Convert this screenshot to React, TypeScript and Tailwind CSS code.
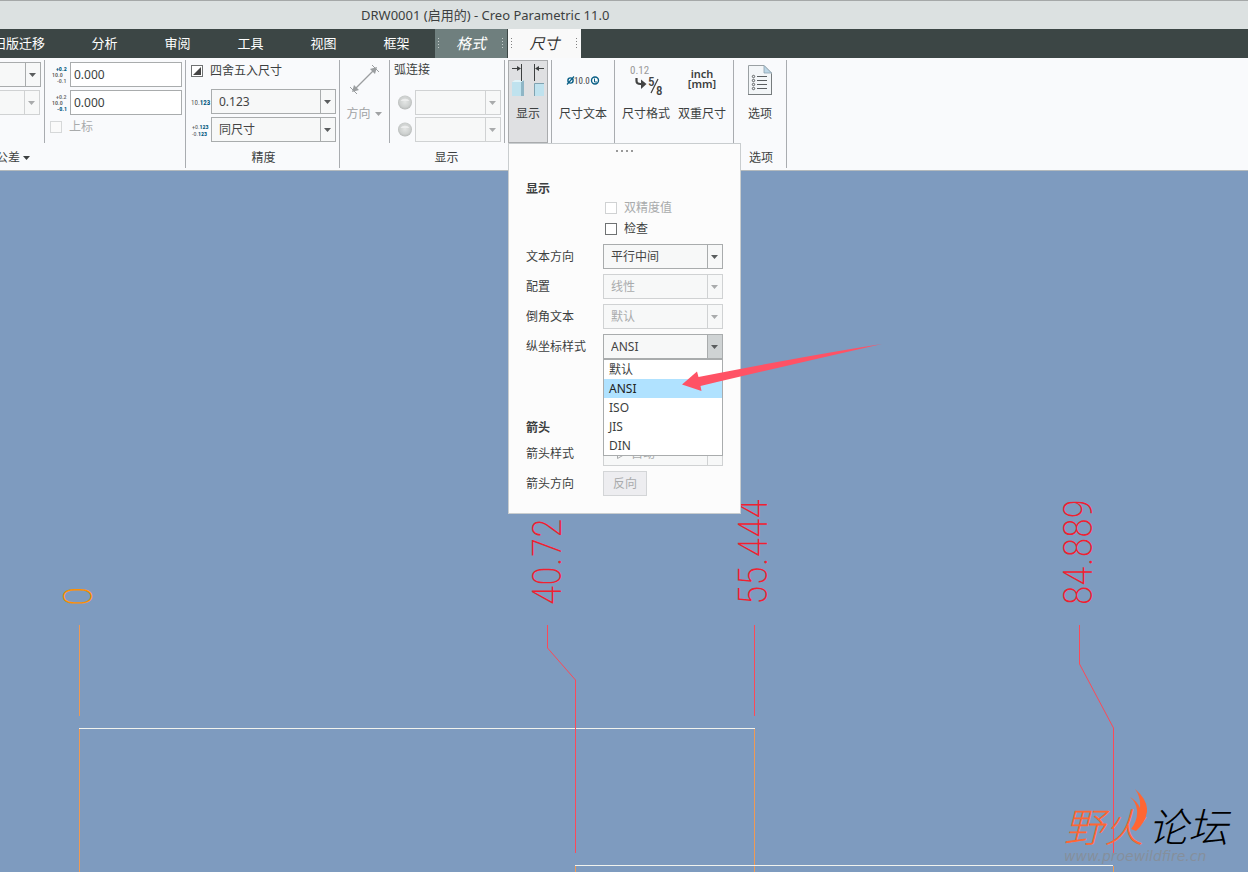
import React from 'react'
import clsx from 'clsx'

const tabs = ['分析', '审阅', '工具', '视图', '框架']
const ordinateStyles = ['默认', 'ANSI', 'ISO', 'JIS', 'DIN']
const narrow = "'Noto Sans ExtraCondensed', 'Roboto Condensed', 'Liberation Sans Narrow', Roboto, sans-serif"
const narrowThin =
  "'Noto Sans ExtraCondensed Thin', 'Noto Sans ExtraCondensed', 'Noto Sans Condensed', 'Roboto Condensed', 'Liberation Sans Narrow', Roboto, sans-serif"

type SelectBoxProps = {
  label: string
  value?: string
  disabled?: boolean
  open?: boolean
  className?: string
  icon?: React.ReactNode
}

const Caret = () => (
  <svg width="8" height="4" viewBox="0 0 8 4" className="shrink-0" aria-hidden="true">
    <path d="M0 0h7L3.500 4z" fill="currentColor" />
  </svg>
)

const SelectBox = ({ label, value = '', disabled, open, className, icon }: SelectBoxProps) => (
  <div
    className={clsx(
      'flex h-[25px] border bg-[#f7f8f8]',
      disabled ? 'border-[#d0d2d3] text-[#a9abac]' : 'border-[#a9acad] text-[#444]',
      className
    )}
  >
    {icon}
    <select
      aria-label={label}
      disabled={disabled}
      defaultValue={value}
      className="min-w-0 flex-1 appearance-none bg-transparent pl-[7px] opacity-100 outline-none"
    >
      <option value={value}>{value}</option>
    </select>
    <span
      className={clsx(
        'flex w-[15px] shrink-0 items-center justify-center border-l',
        disabled ? 'border-[#d0d2d3] text-[#a9abac]' : 'border-[#a9acad] text-[#5a5d5e]',
        open && 'bg-[#cfd3d4]'
      )}
    >
      <Caret />
    </span>
  </div>
)

const Separator = ({ className }: { className?: string }) => (
  <div className={clsx('mt-[2px] w-px shrink-0 self-stretch bg-[#a9acb0]', className)} />
)

const TabGrip = () => (
  <svg width="2" height="14" viewBox="0 0 2 14" className="opacity-60" aria-hidden="true">
    <path d="M0.500 1v12" stroke="currentColor" strokeDasharray="1 2" />
  </svg>
)

const GroupLabel = ({ children }: { children: React.ReactNode }) => (
  <div className="flex h-[27px] items-center justify-center gap-1 pt-[2px] pl-[2px]">{children}</div>
)

const ToleranceIcon = ({ upper }: { upper?: boolean }) => (
  <svg width="18" height="20" viewBox="0 0 18 20" className="shrink-0" fontFamily={narrow} fontSize="6" aria-hidden="true">
    <text x="4" y="6" fill={upper ? '#00567d' : '#666'} fontWeight={upper ? 700 : 500}>+0.2</text>
    <text x="0" y="12" fill="#555" fontWeight="500">10.0</text>
    <text x="5" y="18" fill={upper ? '#666' : '#00567d'} fontWeight={upper ? 500 : 700}>-0.1</text>
  </svg>
)

const DecimalIcon = () => (
  <svg width="20" height="12" viewBox="0 0 20 12" className="shrink-0" fontFamily={narrow} fontSize="7" aria-hidden="true">
    <text x="0" y="9" fill="#555">10.<tspan fill="#00567d" fontWeight="700">123</tspan></text>
  </svg>
)

const ToleranceDecimalIcon = () => (
  <svg width="20" height="18" viewBox="0 0 20 18" className="shrink-0" fontFamily={narrow} fontSize="6" aria-hidden="true">
    <text x="1" y="8" fill="#555">+0.<tspan fill="#00567d" fontWeight="700">123</tspan></text>
    <text x="1" y="15" fill="#555">-0.<tspan fill="#00567d" fontWeight="700">123</tspan></text>
  </svg>
)

const DirectionIcon = () => (
  <svg width="32" height="32" viewBox="0 0 32 32" fill="none" stroke="#9b9ea0" aria-hidden="true">
    <path d="M5 26L26 5" strokeWidth="1.2" />
    <path d="M23 1L30 8M1 23L8 30" />
    <path d="M28 3l-2 7-5-5zM3 28l2-7 5 5z" fill="#9b9ea0" stroke="none" />
  </svg>
)

const Sphere = () => (
  <svg width="16" height="16" viewBox="0 0 16 16" className="shrink-0" aria-hidden="true">
    <defs>
      <radialGradient id="sphere" cx="0.5" cy="0.45" r="0.55">
        <stop offset="0" stopColor="#e4e6e5" />
        <stop offset="0.7" stopColor="#cdd0cf" />
        <stop offset="1" stopColor="#b4b7b6" />
      </radialGradient>
    </defs>
    <circle cx="8" cy="7.500" r="7" fill="url(#sphere)" />
    <path d="M3.500 6a5 4 0 0 1 9 0z" fill="#eceded" />
  </svg>
)

const DisplayIcon = () => (
  <svg width="34" height="34" viewBox="-1 0 34 34" aria-hidden="true">
    <path d="M0 18h9v14H0z" fill="#bfe2ee" />
    <path d="M9 18l3-2v16H9z" fill="#8fb6c6" />
    <path d="M0 18l3-2h9l-3 2z" fill="#e2f3f8" />
    <path d="M22.500 32V19.500H32" fill="none" stroke="#7fa3b1" />
    <path d="M23 20h9v12h-9z" fill="#bfe2ee" />
    <path d="M9.500 0v17M22.500 0v17M0 4.500h8M24 4.500h8" fill="none" stroke="#3d4040" />
    <path d="M9 4.500L5 2v5zM23 4.500L27 2v5z" fill="#3d4040" />
  </svg>
)

const DimTextIcon = () => (
  <svg width="34" height="16" viewBox="0 0 34 16" fontFamily={narrow} aria-hidden="true">
    <circle cx="4.500" cy="7.500" r="2.600" fill="none" stroke="#0a5f86" strokeWidth="1.400" />
    <path d="M1 11.500L8 3.500" stroke="#0a5f86" strokeWidth="1.200" />
    <text x="8" y="11" fontSize="9" fill="#444">10.0</text>
    <circle cx="29" cy="7.500" r="3.500" fill="#fff" stroke="#0a5f86" strokeWidth="1.400" />
    <path d="M28.500 5.500v3.500H31" fill="none" stroke="#0a5f86" />
  </svg>
)

const DimFormatIcon = () => (
  <svg width="36" height="36" viewBox="0 0 36 36" fontFamily={narrow} aria-hidden="true">
    <text x="2" y="11" fontSize="11" fill="#999">0.12</text>
    <path d="M8.500 15v3q0 3 4 3h2" fill="none" stroke="#444" strokeWidth="2.200" />
    <path d="M13 16.500l5.500 4.500-5.500 5z" fill="#444" />
    <text x="20" y="23" fontSize="13" fontWeight="500" fill="#444">5</text>
    <path d="M23 30L30 16" stroke="#444" strokeWidth="1.200" />
    <text x="28" y="32" fontSize="13" fontWeight="500" fill="#444">8</text>
  </svg>
)

const OptionsIcon = () => (
  <svg width="26" height="34" viewBox="0 0 26 34" aria-hidden="true">
    <path d="M1.500 1.500H17L24.500 9v21.500h-23z" fill="#f3f6f8" stroke="#9aa0a3" />
    <path d="M17 1.500V9h7.500z" fill="#bcd6e6" stroke="#8ea3ae" strokeWidth="0.800" />
    <path d="M1 30.500h24M24.500 10v21" stroke="#777c7e" />
    <g fill="none" stroke="#5a5e60">
      <circle cx="6.500" cy="12.500" r="1.200" />
      <circle cx="6.500" cy="16.500" r="1.200" />
      <circle cx="6.500" cy="20.500" r="1.200" />
      <circle cx="6.500" cy="24.500" r="1.200" />
      <path d="M10 12.500h10M10 16.500h10M10 20.500h10M10 24.500h10" />
    </g>
  </svg>
)

type RibbonButtonProps = { label: string; active?: boolean; className?: string; children: React.ReactNode }

const RibbonButton = ({ label, active, className, children }: RibbonButtonProps) => (
  <button
    className={clsx(
      'mt-[2px] flex h-[83px] flex-col items-center border',
      active ? 'border-[#a9abad] bg-[#dfe0e2]' : 'border-transparent',
      className
    )}
  >
    <span className="flex h-[39px] items-center justify-center">{children}</span>
    <span className="leading-[27px] whitespace-nowrap">{label}</span>
  </button>
)

const PanelRow = ({ label, children }: { label: string; children: React.ReactNode }) => (
  <div className="flex h-[25px] items-center">
    <span className="w-[77px] shrink-0">{label}</span>
    {children}
  </div>
)

const DisplayPanel = () => (
  <div className="absolute top-full left-0 z-20 w-[233px] border border-[#c9cdcf] bg-[#fcfcfc] px-[17px] pb-[17px]">
    <div className="flex h-[34px] justify-center gap-[3px] pt-[6px]">
      <i className="size-[2px] bg-[#999]" />
      <i className="size-[2px] bg-[#999]" />
      <i className="size-[2px] bg-[#999]" />
      <i className="size-[2px] bg-[#999]" />
    </div>
    <h2 className="h-[19px] leading-[21px] font-bold">显示</h2>
    <label className="ml-[79px] flex h-[21px] items-center gap-[7px] text-[#a9abac]">
      <input type="checkbox" disabled className="size-3 appearance-none border border-[#d0d2d3] bg-white" />
      双精度值
    </label>
    <label className="ml-[79px] flex h-[21px] items-center gap-[7px]">
      <input type="checkbox" className="size-3 appearance-none border border-[#6f7273] bg-white" />
      检查
    </label>
    <div className="mt-[5px] flex flex-col gap-[5px]">
      <PanelRow label="文本方向">
        <SelectBox label="文本方向" value="平行中间" className="flex-1" />
      </PanelRow>
      <PanelRow label="配置">
        <SelectBox label="配置" value="线性" disabled className="flex-1" />
      </PanelRow>
      <PanelRow label="倒角文本">
        <SelectBox label="倒角文本" value="默认" disabled className="flex-1" />
      </PanelRow>
      <PanelRow label="纵坐标样式">
        <div className="relative flex flex-1">
          <SelectBox label="纵坐标样式" value="ANSI" open className="flex-1" />
          <ul role="listbox" className="absolute top-full right-0 left-0 z-10 border border-[#a9acad] bg-white">
            {ordinateStyles.map((name) => (
              <li
                key={name}
                role="option"
                aria-selected={name === 'ANSI'}
                className={clsx('h-[19px] pl-[5px] leading-[19px]', name === 'ANSI' && 'bg-[#b0e2ff] text-[#222]')}
              >
                {name}
              </li>
            ))}
          </ul>
        </div>
      </PanelRow>
    </div>
    <h2 className="mt-[59px] h-[19px] leading-[19px] font-bold">箭头</h2>
    <div className="mt-1 flex flex-col gap-[5px]">
      <PanelRow label="箭头样式">
        <SelectBox
          label="箭头样式"
          value="自动"
          disabled
          className="flex-1"
          icon={
            <svg width="20" height="23" viewBox="0 0 20 23" className="shrink-0" fill="none" stroke="#a9abac" aria-hidden="true">
              <path d="M7 12.500h7M13.500 9v7.500l7-4" />
            </svg>
          }
        />
      </PanelRow>
      <PanelRow label="箭头方向">
        <button disabled className="h-[25px] w-11 border border-[#d3d5d7] bg-[#ededf0] text-[#a9abac]">
          反向
        </button>
      </PanelRow>
    </div>
    {/* callout arrow pointing at the selected style */}
    <svg width="204" height="50" viewBox="0 0 204 50" className="absolute top-[200px] left-[172px] z-20" aria-hidden="true">
      <path d="M1 40.500L16 27.500l1.500 5.500Q130 11 201 0Q130 16 19.500 42l1 5z" fill="#ff5265" />
    </svg>
  </div>
)

const Ribbon = () => (
  <div className="relative z-10 flex h-[113px] shrink-0 border-b border-[#b4babd] bg-[#f9fafc] whitespace-nowrap">
    <section className="w-[185px] shrink-0">
      <div className="flex h-[85px]">
        <div className="flex w-11 flex-col gap-[3px] pt-1">
          <SelectBox label="公差模式" className="w-[41px] border-l-0" />
          <SelectBox label="公差表" disabled className="w-10 border-l-0" />
        </div>
        <Separator />
        <div className="flex flex-1 flex-col gap-[3px] pt-1 pr-[3px] pl-[7px]">
          <label className="flex items-center">
            <ToleranceIcon upper />
            <input aria-label="上公差" defaultValue="0.000" className="h-[25px] w-[112px] border border-[#a9acad] bg-white pl-[3px] outline-none" />
          </label>
          <label className="flex items-center">
            <ToleranceIcon />
            <input aria-label="下公差" defaultValue="0.000" className="h-[25px] w-[112px] border border-[#a9acad] bg-white pl-[3px] outline-none" />
          </label>
          <label className="flex h-[18px] items-center gap-[7px] text-[#a9abac]">
            <input type="checkbox" disabled className="-ml-[2px] size-3 appearance-none border border-[#d6d8d9] bg-[#fafafa]" />
            上标
          </label>
        </div>
      </div>
      <div className="flex h-[27px] items-center gap-[3px] overflow-hidden pt-[2px]">
        <span className="-ml-1">公差</span>
        <Caret />
      </div>
    </section>
    <Separator className="mb-[2px]" />
    <section className="w-[153px] shrink-0">
      <div className="flex h-[85px] flex-col gap-[3px] px-[3px] pt-[3px]">
        <label className="mb-[6px] flex h-[19px] items-center gap-[7px] pl-[2px]">
          <span className="relative flex size-3">
            <input type="checkbox" defaultChecked className="size-3 appearance-none border border-[#6f7273] bg-white" />
            <svg width="12" height="12" viewBox="0 0 12 12" className="pointer-events-none absolute inset-0" aria-hidden="true">
              <path d="M10 2v8H2z" fill="#444" />
            </svg>
          </span>
          四舍五入尺寸
        </label>
        <div className="flex items-center justify-between pl-[2px]">
          <DecimalIcon />
          <SelectBox label="小数位数" value="0.123" className="w-[125px]" />
        </div>
        <div className="flex items-center justify-between pl-[2px]">
          <ToleranceDecimalIcon />
          <SelectBox label="公差小数位数" value="同尺寸" className="w-[125px]" />
        </div>
      </div>
      <GroupLabel>精度</GroupLabel>
    </section>
    <Separator className="mb-[2px]" />
    <section className="w-[211px] shrink-0">
      <div className="flex h-[85px]">
        <button disabled className="flex w-[49px] flex-col items-center pt-[6px] text-[#a0a2a4]">
          <DirectionIcon />
          <span className="mt-[8px] flex items-center gap-1 leading-5">
            方向 <Caret />
          </span>
        </button>
        <Separator />
        <div className="flex w-[114px] flex-col gap-[2px] pt-[2px] pr-[3px] pl-[4px]">
          <span className="mb-[9px] leading-[19px]">弧连接</span>
          <div className="flex items-center justify-between pl-[3px]">
            <Sphere />
            <SelectBox label="起始弧连接" disabled className="w-[86px]" />
          </div>
          <div className="flex items-center justify-between pl-[3px]">
            <Sphere />
            <SelectBox label="终止弧连接" disabled className="w-[86px]" />
          </div>
        </div>
        <Separator />
        <div className="relative ml-[3px]">
          <RibbonButton label="显示" active className="w-10">
            <DisplayIcon />
          </RibbonButton>
          <DisplayPanel />
        </div>
      </div>
      <GroupLabel>显示</GroupLabel>
    </section>
    <Separator className="mb-[2px]" />
    <RibbonButton label="尺寸文本" className="w-[62px]">
      <DimTextIcon />
    </RibbonButton>
    <Separator className="mb-[2px]" />
    <div className="flex w-[118px] shrink-0 justify-center">
      <RibbonButton label="尺寸格式" className="w-14">
        <DimFormatIcon />
      </RibbonButton>
      <RibbonButton label="双重尺寸" className="w-14">
        <span className="pb-1 text-[11px] leading-[10px] font-semibold whitespace-pre">{'inch\n[mm]'}</span>
      </RibbonButton>
    </div>
    <Separator className="mb-[2px]" />
    <section className="w-[52px] shrink-0">
      <div className="flex h-[85px] justify-center">
        <RibbonButton label="选项" className="w-12">
          <OptionsIcon />
        </RibbonButton>
      </div>
      <GroupLabel>选项</GroupLabel>
    </section>
    <Separator className="mb-[2px]" />
  </div>
)

const Drawing = () => (
  <svg className="absolute inset-0 size-full" aria-label="纵坐标尺寸">
    <g fill="none" stroke="#ee9a55">
      <path d="M79.500 454v91M79.500 557v600M754.500 557v600M575.500 695v400M1113.500 695v400" />
    </g>
    <g fill="none" stroke="#f1f3ee">
      <path d="M79 557.500h676M575 694.500h538" />
    </g>
    <g fill="none" stroke="#fb4a58">
      <path d="M754.500 454v91" />
      <path d="M547.500 454v23l28 32v173" />
      <path d="M1079.500 454v39l34 64v125" />
    </g>
    <g fill="#f02030" fontSize="40" fontWeight="200" fontFamily={narrowThin}>
      <text transform="translate(92 435) rotate(-90)" fill="#ff9000">0</text>
      <text transform="translate(561 434) rotate(-90)">40.72</text>
      <text transform="translate(767 434) rotate(-90)">55.444</text>
      <text transform="translate(1092 434) rotate(-90)">84.889</text>
    </g>
  </svg>
)

const Watermark = () => (
  <div className="absolute right-5 bottom-2 flex flex-col items-start">
    <div className="flex text-[40px] leading-[42px] font-light italic">
      <span className="text-[#ff6633]">野火</span>
      <span className="ml-1 text-black">论坛</span>
    </div>
    <svg width="18" height="44" viewBox="0 0 18 44" className="absolute -top-[18px] left-[65px]" aria-hidden="true">
      <path d="M6 1Q19 12 18 24Q16 35 7 43L2 41Q9 32 8 22Q7 14 1 9Q8 13 11 20Q12 9 6 1z" fill="#ff6633" />
    </svg>
    <span className="font-['DejaVu_Sans'] text-[14px] leading-4 text-[#858f9c] italic">www.proewildfire.cn</span>
  </div>
)

const App = () => {
  return (
    <div className="flex min-h-screen flex-col overflow-hidden bg-[#7e9bbf] font-['Noto_Sans','Noto_Sans_CJK_SC',sans-serif] text-[12px] text-[#3c3f40]">
      <header className="h-[29px] shrink-0 border-t border-[#a5a8a8] bg-[#dce1e1] pl-[361px] text-[13px] leading-7">
        DRW0001 (启用的) - Creo Parametric 11.0
      </header>
      <nav className="flex h-[29px] shrink-0 overflow-hidden bg-[#3c4645] text-[13px] whitespace-nowrap text-white">
        <button className="-ml-[30px] w-[98px] shrink-0">旧版迁移</button>
        {tabs.map((tab) => (
          <button key={tab} className="w-[73px] shrink-0">
            {tab}
          </button>
        ))}
        <button className="ml-[2px] flex w-[72px] shrink-0 items-center justify-between bg-[#6f7f7e] px-[3px] text-[15px] italic">
          <TabGrip />
          格式
          <TabGrip />
        </button>
        <button className="ml-px flex w-[73px] shrink-0 items-center justify-between bg-[#f9f9f9] px-[3px] text-[15px] text-[#333] italic">
          <TabGrip />
          尺寸
          <TabGrip />
        </button>
      </nav>
      <Ribbon />
      <main className="relative flex-1 overflow-hidden">
        <Drawing />
        <Watermark />
      </main>
    </div>
  )
}

export default App
